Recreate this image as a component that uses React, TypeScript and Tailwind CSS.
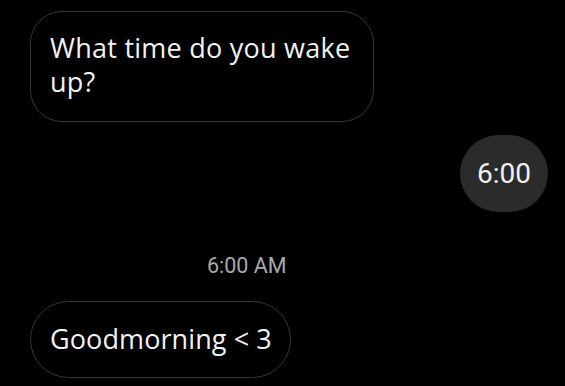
export default function App() {
  return (
    <div className="w-[565px] h-[386px] bg-black overflow-hidden flex flex-col font-['Open_Sans',sans-serif]">
      <div className="ml-[30px] mt-[11px] w-[344px] h-[111px] rounded-[32px] border border-[#363636] pl-[19px] pr-[12px] pt-[19px] text-[27px] leading-[34px] text-[#f2f2f2] tracking-[0.25px]">
        What time do you wake up?
      </div>
      <div className="self-end mr-[17px] mt-[13px] w-[88px] h-[77px] rounded-[40px] bg-[#2b2b2b] flex items-center justify-center text-[28px] text-[#f0f0f0] font-['Roboto',sans-serif]">
        6:00
      </div>
      <div className="ml-[207px] mt-[40px] text-[21.5px] leading-[28px] text-[#a9a9a9] font-['Roboto',sans-serif]">
        6:00 AM
      </div>
      <div className="ml-[30px] mt-[21px] w-[261px] h-[77px] rounded-[39px] border border-[#363636] pl-[19px] flex items-center text-[27px] text-[#f2f2f2] whitespace-nowrap tracking-[0.1px]">
        Goodmorning &lt; 3
      </div>
    </div>
  );
}
